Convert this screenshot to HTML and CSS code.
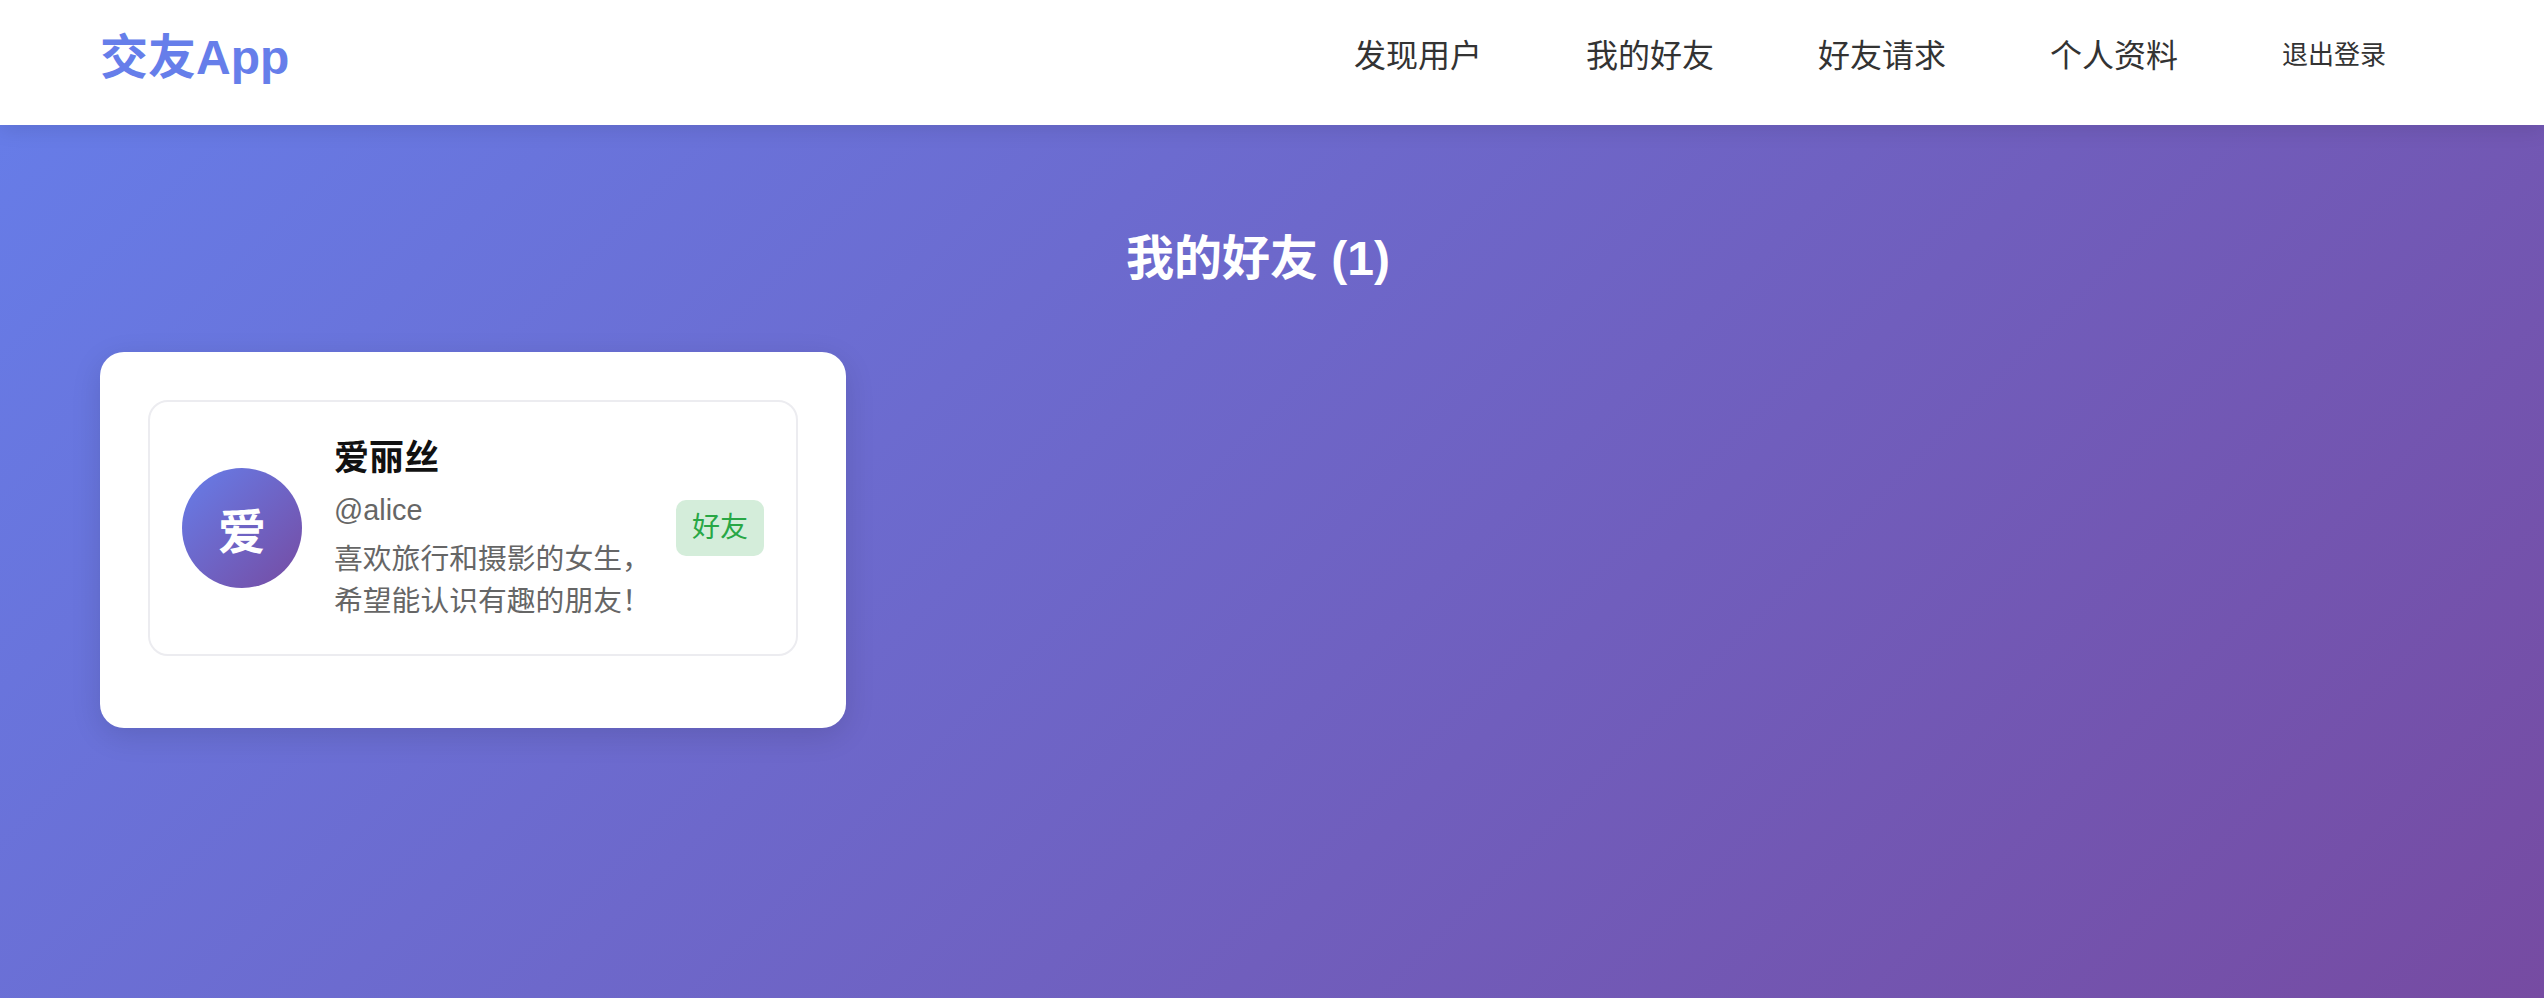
FILE: index.html
```html
<!DOCTYPE html>
<html lang="zh-CN">
<head>
    <meta charset="UTF-8">
    <meta name="viewport" content="width=device-width, initial-scale=1.0">
    <title>交友App - 我的好友</title>
    <link rel="stylesheet" href="styles.css">
</head>
<body>
    <nav class="navbar">
        <div class="logo">交友App</div>
        <div class="nav-links">
            <a class="nav-link" href="#">发现用户</a>
            <a class="nav-link" href="#">我的好友</a>
            <a class="nav-link" href="#">好友请求</a>
            <a class="nav-link" href="#">个人资料</a>
            <button class="logout-btn">退出登录</button>
        </div>
    </nav>

    <main class="main">
        <h2 class="page-title">我的好友 (1)</h2>

        <div class="friends-card">
            <div class="friend-item">
                <div class="avatar">爱</div>
                <div class="friend-info">
                    <h3 class="friend-name">爱丽丝</h3>
                    <div class="friend-username">@alice</div>
                    <p class="friend-bio">喜欢旅行和摄影的女生，希望能认识有趣的朋友！</p>
                </div>
                <span class="friend-badge">好友</span>
            </div>
        </div>
    </main>
</body>
</html>
```

FILE: styles.css
```css
* {
    box-sizing: border-box;
}
body {
    margin: 0;
    min-height: 100vh;
    font-family: 'Liberation Sans', 'Noto Sans CJK SC', sans-serif;
    background: linear-gradient(135deg, #667eea 0%, #764ba2 100%);
    color: #333;
}
.navbar {
    height: 125px;
    display: flex;
    align-items: center;
    justify-content: space-between;
    padding: 0 132px 20px 100px;
    background: white;
    box-shadow: 0 4px 20px rgba(0,0,0,0.1);
}
.logo {
    font-size: 48px;
    font-weight: 700;
    color: #667eea;
}
.nav-links {
    display: flex;
    align-items: center;
    gap: 52px;
}
.nav-link {
    color: #333;
    text-decoration: none;
    font-size: 32px;
    padding: 0 26px;
}
.logout-btn {
    background: none;
    border: none;
    color: #333;
    font-family: inherit;
    font-size: 26px;
    padding: 0 26px;
    cursor: pointer;
}
.main {
    padding: 105px 128px 40px 100px;
}
.page-title {
    margin: 0 0 64px;
    text-align: center;
    color: white;
    font-size: 48px;
    line-height: 1.2;
    font-weight: 700;
}
.friends-card {
    width: 746px;
    background: white;
    border-radius: 24px;
    padding: 48px 48px 24px;
    box-shadow: 0 8px 30px rgba(0,0,0,0.12);
}
.friend-item {
    display: flex;
    align-items: center;
    gap: 32px;
    padding: 32px;
    border: 2px solid #ececf0;
    border-radius: 20px;
    margin-bottom: 48px;
}
.avatar {
    width: 120px;
    height: 120px;
    flex-shrink: 0;
    border-radius: 50%;
    background: linear-gradient(135deg, #667eea 0%, #764ba2 100%);
    color: white;
    font-size: 48px;
    font-weight: 700;
    display: flex;
    align-items: center;
    justify-content: center;
}
.friend-info {
    flex: 1;
    min-width: 0;
    padding-top: 5px;
}
.friend-name {
    margin: 0 0 12px;
    font-size: 35px;
    line-height: 38px;
    font-weight: 700;
    color: #111;
}
.friend-username {
    font-size: 28.8px;
    line-height: 43px;
    color: #666;
    margin-bottom: 6px;
}
.friend-bio {
    margin: 0;
    font-size: 28.8px;
    line-height: 42px;
    color: #666;
}
.friend-badge {
    flex-shrink: 0;
    margin-left: -16px;
    height: 56px;
    line-height: 56px;
    padding: 0 16px;
    font-size: 28px;
    color: #28a745;
    background: #d4edda;
    border-radius: 10px;
}
```
